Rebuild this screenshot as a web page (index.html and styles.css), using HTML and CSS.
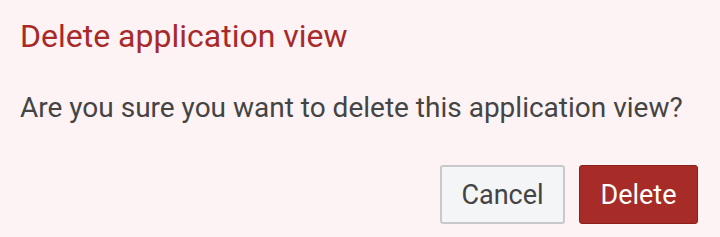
FILE: index.html
```html
<!DOCTYPE html>
<html lang="en">

<head>
    <meta charset="UTF-8">
    <meta name="viewport" content="width=device-width, initial-scale=1.0">
    <title>Delete application view</title>
    <link rel="stylesheet" href="styles.css">
</head>

<body>
    <!-- 删除确认弹窗 -->
    <div class="dialog">
        <h2 class="dialog-title">Delete application view</h2>
        <p class="dialog-text">Are you sure you want to delete this application view?</p>
        <div class="dialog-btns">
            <button class="btn btn-cancel">Cancel</button>
            <button class="btn btn-delete">Delete</button>
        </div>
    </div>
</body>

</html>
```

FILE: styles.css
```css
* {
    margin: 0;
    padding: 0;
    box-sizing: border-box;
}

html,
body {
    height: 100%;
}

body {
    background-color: #fdf3f4;
    font-family: Roboto, "Liberation Sans", sans-serif;
}

.dialog {
    padding: 16px 22px 13px 20px;
}

.dialog-title {
    font-size: 32px;
    font-weight: 400;
    line-height: 40px;
    color: #a8292a;
}

.dialog-text {
    margin-top: 34px;
    font-size: 28px;
    line-height: 36px;
    color: #444;
}

.dialog-btns {
    display: flex;
    justify-content: flex-end;
    gap: 14px;
    margin-top: 39px;
}

.btn {
    height: 59px;
    font-family: inherit;
    font-size: 27px;
    border-radius: 3px;
    cursor: pointer;
}

.btn-cancel {
    width: 125px;
    color: #444;
    background-color: #f4f5f7;
    border: 2px solid #c9c9cb;
}

.btn-delete {
    width: 119px;
    color: #fff;
    background-color: #a72b26;
    border: 1px solid #8b211d;
}
```
